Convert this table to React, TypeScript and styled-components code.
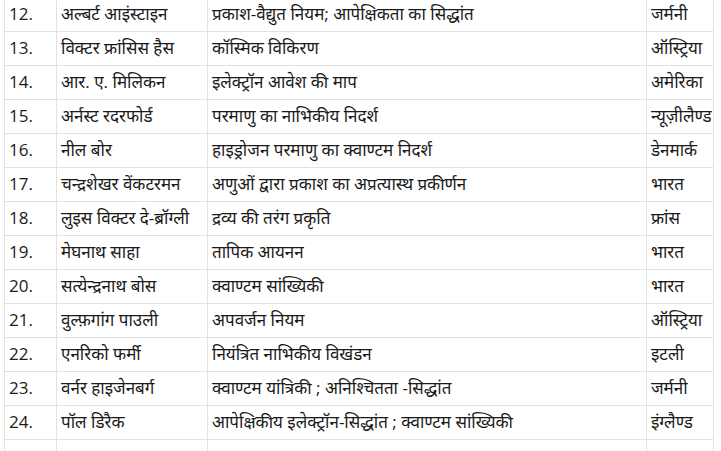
import React from 'react';
import styled, { createGlobalStyle } from 'styled-components';

const GlobalStyle = createGlobalStyle`
  html, body {
    margin: 0;
    padding: 0;
    background: #ffffff;
    overflow: hidden;
  }
`;

const rows = [
  ['12.', 'अल्बर्ट आइंस्टाइन', 'प्रकाश-वैद्युत नियम; आपेक्षिकता का सिद्धांत', 'जर्मनी'],
  ['13.', 'विक्टर फ्रांसिस हैस', 'कॉस्मिक विकिरण', 'ऑस्ट्रिया'],
  ['14.', 'आर. ए. मिलिकन', 'इलेक्ट्रॉन आवेश की माप', 'अमेरिका'],
  ['15.', 'अर्नस्ट रदरफोर्ड', 'परमाणु का नाभिकीय निदर्श', 'न्यूज़ीलैण्ड'],
  ['16.', 'नील बोर', 'हाइड्रोजन परमाणु का क्वाण्टम निदर्श', 'डेनमार्क'],
  ['17.', 'चन्द्रशेखर वेंकटरमन', 'अणुओं द्वारा प्रकाश का अप्रत्यास्थ प्रकीर्णन', 'भारत'],
  ['18.', 'लुइस विक्टर दे-ब्रॉग्ली', 'द्रव्य की तरंग प्रकृति', 'फ्रांस'],
  ['19.', 'मेघनाथ साहा', 'तापिक आयनन', 'भारत'],
  ['20.', 'सत्येन्द्रनाथ बोस', 'क्वाण्टम सांख्यिकी', 'भारत'],
  ['21.', 'वुल्फ़गांग पाउली', 'अपवर्जन नियम', 'ऑस्ट्रिया'],
  ['22.', 'एनरिको फर्मी', 'नियंत्रित नाभिकीय विखंडन', 'इटली'],
  ['23.', 'वर्नर हाइजेनबर्ग', 'क्वाण्टम यांत्रिकी ; अनिश्चितता -सिद्धांत', 'जर्मनी'],
  ['24.', 'पॉल डिरैक', 'आपेक्षिकीय इलेक्ट्रॉन-सिद्धांत ; क्वाण्टम सांख्यिकी', 'इंग्लैण्ड'],
  ['', '', '', ''],
];

// full column widths, line to line
const widths = [52, 151, 439, 67];

const Page = styled.div`
  padding-left: 4px;
  margin-top: -3px;
`;

const Table = styled.table`
  border-collapse: collapse;
  table-layout: fixed;
  width: ${widths.reduce((a, b) => a + b, 0)}px;
  font-family: "Open Sans", "Noto Sans", "Noto Sans Devanagari", "Lohit Devanagari", sans-serif;
  font-size: 17px;
  color: #1a1a1a;
`;

const Col = styled.col<{ $w: number }>`
  width: ${(p) => p.$w}px;
`;

const Cell = styled.td`
  height: 33px;
  padding: 0 4px;
  border: 1px solid #e2e2e2;
  vertical-align: middle;
  white-space: nowrap;
  overflow: hidden;
  line-height: 1.2;
`;

const App = () => {
  return (
    <>
      <GlobalStyle />
      <Page>
        <Table>
          <colgroup>
            {widths.map((w, i) => (
              <Col key={i} $w={w} />
            ))}
          </colgroup>
          <tbody>
            {rows.map((r, n) => (
              <tr key={n}>
                {r.map((c, i) => (
                  <Cell key={i}>{c}</Cell>
                ))}
              </tr>
            ))}
          </tbody>
        </Table>
      </Page>
    </>
  );
};

export default App;
